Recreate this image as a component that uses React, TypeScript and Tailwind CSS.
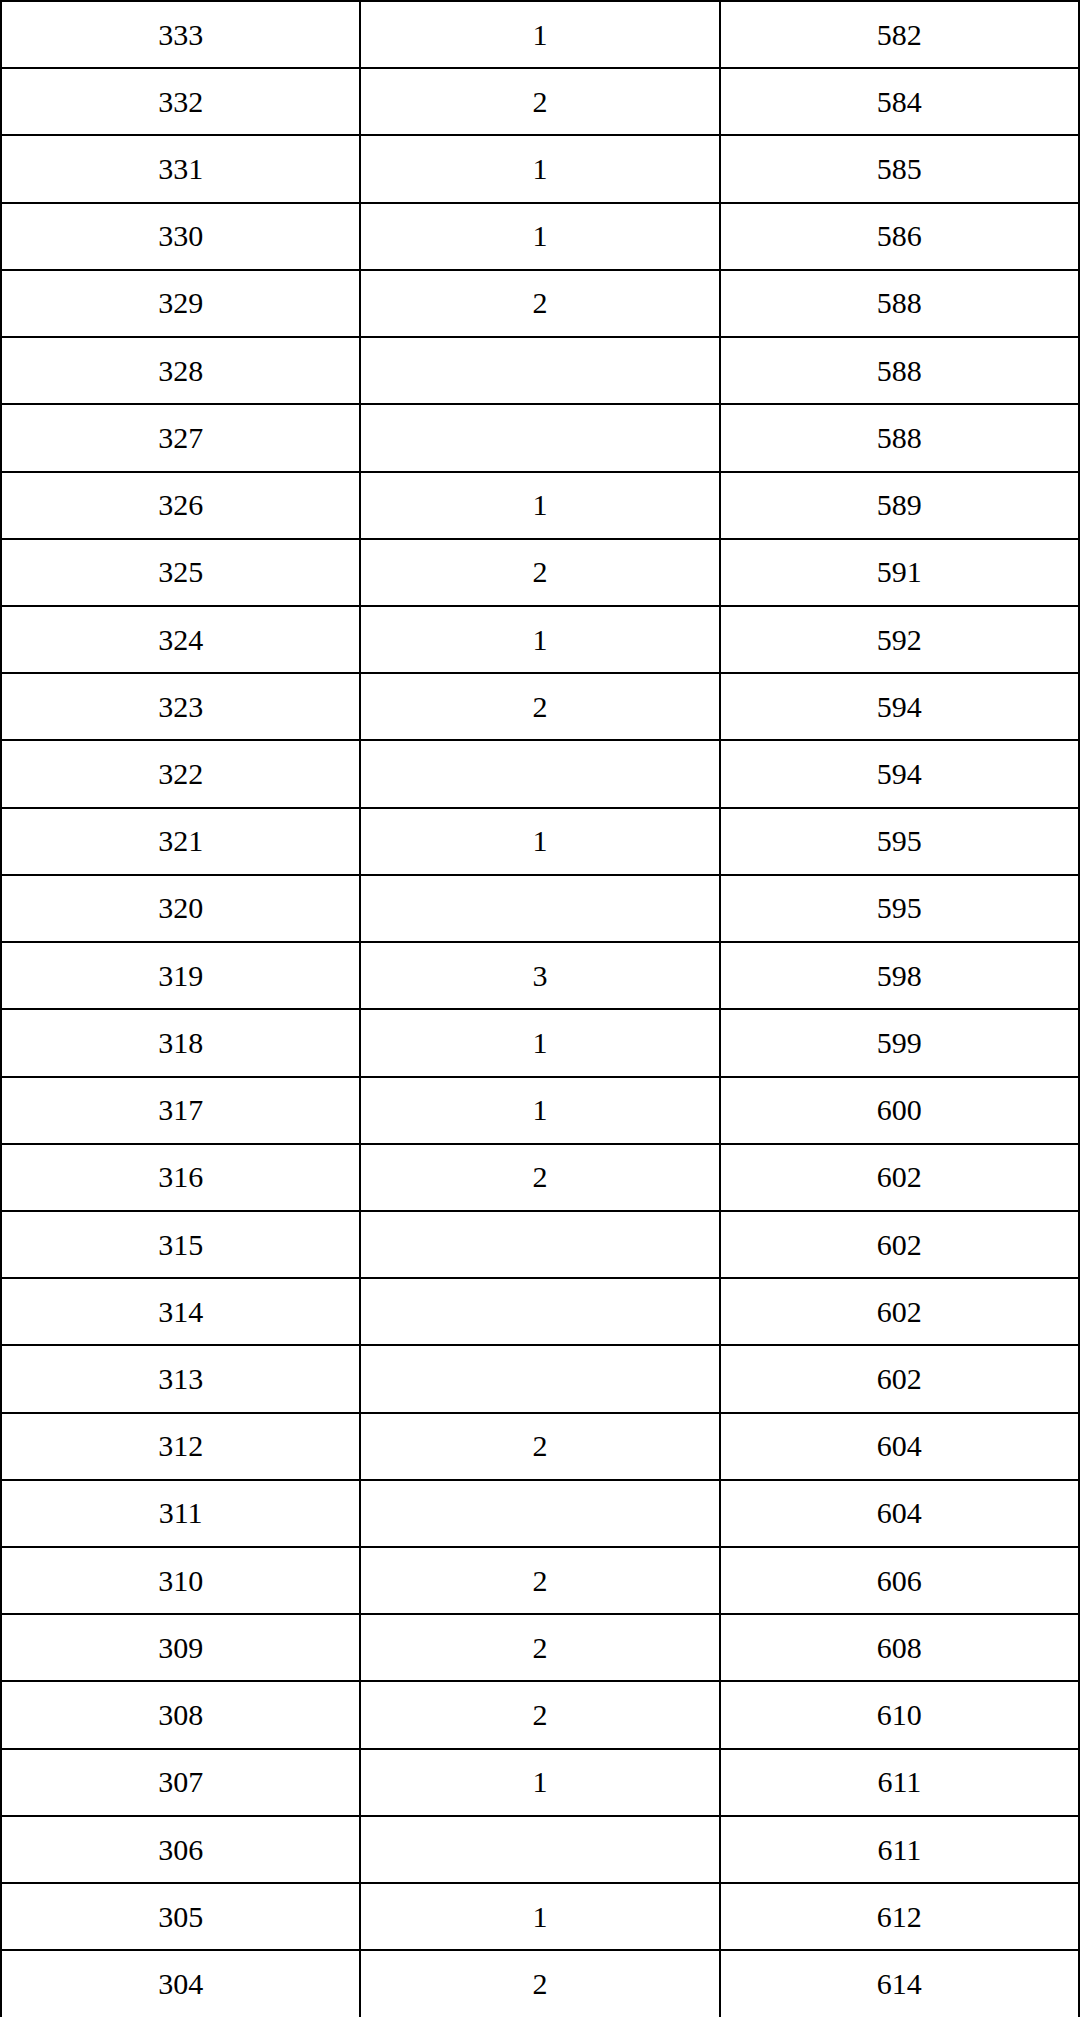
import React from 'react';

const rows: [string, string, string][] = [
    ['333', '1', '582'],
    ['332', '2', '584'],
    ['331', '1', '585'],
    ['330', '1', '586'],
    ['329', '2', '588'],
    ['328', '', '588'],
    ['327', '', '588'],
    ['326', '1', '589'],
    ['325', '2', '591'],
    ['324', '1', '592'],
    ['323', '2', '594'],
    ['322', '', '594'],
    ['321', '1', '595'],
    ['320', '', '595'],
    ['319', '3', '598'],
    ['318', '1', '599'],
    ['317', '1', '600'],
    ['316', '2', '602'],
    ['315', '', '602'],
    ['314', '', '602'],
    ['313', '', '602'],
    ['312', '2', '604'],
    ['311', '', '604'],
    ['310', '2', '606'],
    ['309', '2', '608'],
    ['308', '2', '610'],
    ['307', '1', '611'],
    ['306', '', '611'],
    ['305', '1', '612'],
    ['304', '2', '614'],
];

export default function App() {
    return (
        <div className="w-[1080px] h-[2017px] bg-white">
            <table className="w-full h-full table-fixed border-collapse text-black text-[30px] font-['Liberation_Serif',serif]">
                <tbody>
                    {rows.map((row, i) => (
                        <tr key={i} className="h-[67.23px]">
                            {row.map((cell, j) => (
                                <td key={j} className="border-2 border-black text-center align-middle p-0 leading-none">
                                    {cell}
                                </td>
                            ))}
                        </tr>
                    ))}
                </tbody>
            </table>
        </div>
    );
}
